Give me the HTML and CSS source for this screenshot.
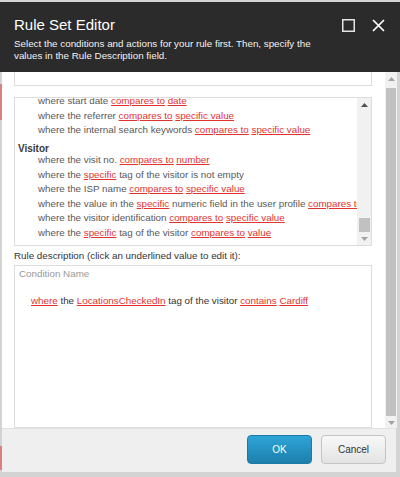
FILE: index.html
```html
<!DOCTYPE html>
<html>
<head>
<meta charset="utf-8">
<link rel="stylesheet" href="styles.css">
</head>
<body>
<div class="page">
  <header class="hdr">
    <div class="hdr-top">
      <h1 class="title">Rule Set Editor</h1>
      <div class="hdr-icons">
        <svg class="ico" width="13" height="13" viewBox="0 0 13 13"><rect x="0.75" y="0.75" width="11.5" height="11.5" fill="none" stroke="#e6e6e6" stroke-width="1.5"/></svg>
        <svg class="ico" width="13" height="13" viewBox="0 0 13 13"><path d="M1 1 L12 12 M12 1 L1 12" stroke="#ffffff" stroke-width="1.7" fill="none"/></svg>
      </div>
    </div>
    <p class="sub">Select the conditions and actions for your rule first. Then, specify the<br>values in the Rule Description field.</p>
  </header>
  <div class="main">
    <div class="content">
      <div class="topbox"></div>
      <div class="listbox">
        <div class="list">
          <div class="list-inner">
            <div class="item">where start date <span class="lnk">compares to</span> <span class="lnk">date</span></div>
            <div class="item">where the referrer <span class="lnk">compares to</span> <span class="lnk">specific value</span></div>
            <div class="item">where the internal search keywords <span class="lnk">compares to</span> <span class="lnk">specific value</span></div>
            <div class="grp">Visitor</div>
            <div class="item">where the visit no. <span class="lnk">compares to</span> <span class="lnk">number</span></div>
            <div class="item">where the <span class="lnk">specific</span> tag of the visitor is not empty</div>
            <div class="item">where the ISP name <span class="lnk">compares to</span> <span class="lnk">specific value</span></div>
            <div class="item">where the value in the <span class="lnk">specific</span> numeric field in the user profile <span class="lnk">compares to</span> <span class="lnk">specific value</span></div>
            <div class="item">where the visitor identification <span class="lnk">compares to</span> <span class="lnk">specific value</span></div>
            <div class="item">where the <span class="lnk">specific</span> tag of the visitor <span class="lnk">compares to</span> <span class="lnk">value</span></div>
          </div>
        </div>
        <div class="sb sb-inner">
          <div class="sb-btn sb-up"><svg width="7" height="4" viewBox="0 0 7 4"><polygon points="0,4 7,4 3.5,0" fill="#505050"/></svg></div>
          <div class="sb-track"><div class="sb-thumb"></div></div>
          <div class="sb-btn sb-down"><svg width="7" height="4" viewBox="0 0 7 4"><polygon points="0,0 7,0 3.5,4" fill="#a3a3a3"/></svg></div>
        </div>
      </div>
      <div class="desc-label">Rule description (click an underlined value to edit it):</div>
      <div class="descbox">
        <div class="cond-name">Condition Name</div>
        <div class="rule"><span class="lnk">where</span> the <span class="lnk">LocationsCheckedIn</span> tag of the visitor <span class="lnk">contains</span> <span class="lnk">Cardiff</span></div>
      </div>
    </div>
    <div class="sb sb-outer">
      <div class="sb-btn sb-up-o"><svg width="7" height="4" viewBox="0 0 7 4"><polygon points="0,4 7,4 3.5,0" fill="#a3a3a3"/></svg></div>
      <div class="sb-thumb-o"></div>
      <div class="sb-btn sb-down-o"><svg width="7" height="4" viewBox="0 0 7 4"><polygon points="0,0 7,0 3.5,4" fill="#a3a3a3"/></svg></div>
    </div>
  </div>
  <footer class="ftr">
    <button class="btn btn-ok">OK</button>
    <button class="btn btn-cancel">Cancel</button>
  </footer>
</div>
</body>
</html>
```

FILE: styles.css
```css
html, body {
  margin: 0;
  padding: 0;
}
body {
  width: 400px;
  height: 477px;
  overflow: hidden;
  font-family: "Liberation Sans", Arial, sans-serif;
  font-size: 9.8px;
}
.page {
  width: 400px;
  height: 477px;
  padding-top: 2px;
  box-sizing: border-box;
  background:
    linear-gradient(to bottom, transparent 84px, #d98080 84px, #d98080 120px, transparent 120px, transparent 446px, #d98080 446px, #d98080 470px, transparent 470px) no-repeat 0 0 / 2px 100%,
    #d3d3d3;
}
.hdr {
  background: #2b2b2b;
  color: #ffffff;
  padding: 14px 15px 10px 14px;
  height: 70px;
  box-sizing: border-box;
}
.hdr-top {
  display: flex;
  align-items: center;
  justify-content: space-between;
  height: 18px;
}
.title {
  margin: 0;
  font-size: 15px;
  font-weight: normal;
  line-height: 18px;
}
.hdr-icons {
  display: flex;
  gap: 17px;
  align-items: center;
}
.ico {
  display: block;
}
.sub {
  margin: 4px 0 0 0;
  font-size: 9.8px;
  line-height: 12px;
  color: #f2f2f2;
}
.main {
  display: flex;
  margin: 0 3px 0 2px;
  height: 356px;
  background: #ffffff;
}
.content {
  flex: 1;
  padding: 0 13px 0 12px;
  display: flex;
  flex-direction: column;
  min-width: 0;
}
.topbox {
  height: 13px;
  border: 1px solid #dcdcdc;
  border-top: none;
  flex: none;
}
.listbox {
  margin-top: 11px;
  height: 149px;
  box-sizing: border-box;
  border: 1px solid #dcdcdc;
  display: flex;
  flex: none;
}
.list {
  flex: 1;
  overflow: hidden;
  min-width: 0;
}
.list-inner {
  margin-top: -4px;
}
.item {
  white-space: nowrap;
  line-height: 14.6px;
  padding-left: 23px;
  color: #595959;
}
.grp {
  white-space: nowrap;
  padding: 6px 0 0 3px;
  line-height: 9.2px;
  font-weight: bold;
  font-size: 10px;
  color: #3a3a3a;
}
.lnk {
  color: #e3332f;
  text-decoration: underline;
}
.sb {
  display: flex;
  flex-direction: column;
  flex: none;
  background: #f1f1f1;
}
.sb-inner {
  width: 14px;
}
.sb-btn {
  display: flex;
  align-items: center;
  justify-content: center;
  flex: none;
}
.sb-up {
  height: 14px;
}
.sb-down {
  height: 13px;
}
.sb-track {
  flex: 1;
  display: flex;
  flex-direction: column;
  justify-content: flex-end;
}
.sb-thumb {
  height: 14px;
  margin: 0 1px 0 2px;
  background: #c1c1c1;
}
.desc-label {
  line-height: 15.5px;
  margin: 2px 0 1.5px 0;
  color: #333333;
  white-space: nowrap;
}
.descbox {
  flex: 1;
  border: 1px solid #dcdcdc;
  padding: 2px 4px;
  color: #333333;
  min-height: 0;
}
.cond-name {
  line-height: 12px;
  color: #999999;
}
.rule {
  margin-top: 14.7px;
  padding-left: 12px;
  line-height: 12px;
  white-space: nowrap;
}
.sb-outer {
  width: 12px;
}
.sb-up-o {
  height: 14px;
}
.sb-thumb-o {
  flex: 1;
  margin: 2px 1px 1px 1px;
  background: #c1c1c1;
}
.sb-down-o {
  height: 11px;
}
.ftr {
  margin: 0 4px 0 2px;
  height: 44px;
  box-sizing: border-box;
  background: #efefef;
  border-top: 1px solid #e2e2e2;
  display: flex;
  justify-content: flex-end;
  align-items: flex-start;
  gap: 9px;
  padding: 6px 10px 0 0;
}
.btn {
  width: 65px;
  height: 29px;
  border-radius: 4px;
  font-family: "Liberation Sans", Arial, sans-serif;
  font-size: 10px;
  padding: 0;
  cursor: pointer;
}
.btn-ok {
  color: #ffffff;
  border: 1px solid #1b7aa6;
  background: linear-gradient(to bottom, #2ea4d6, #1c7fae);
}
.btn-cancel {
  color: #333333;
  border: 1px solid #c4c4c4;
  background: linear-gradient(to bottom, #f8f8f8, #e3e3e3);
}
```
